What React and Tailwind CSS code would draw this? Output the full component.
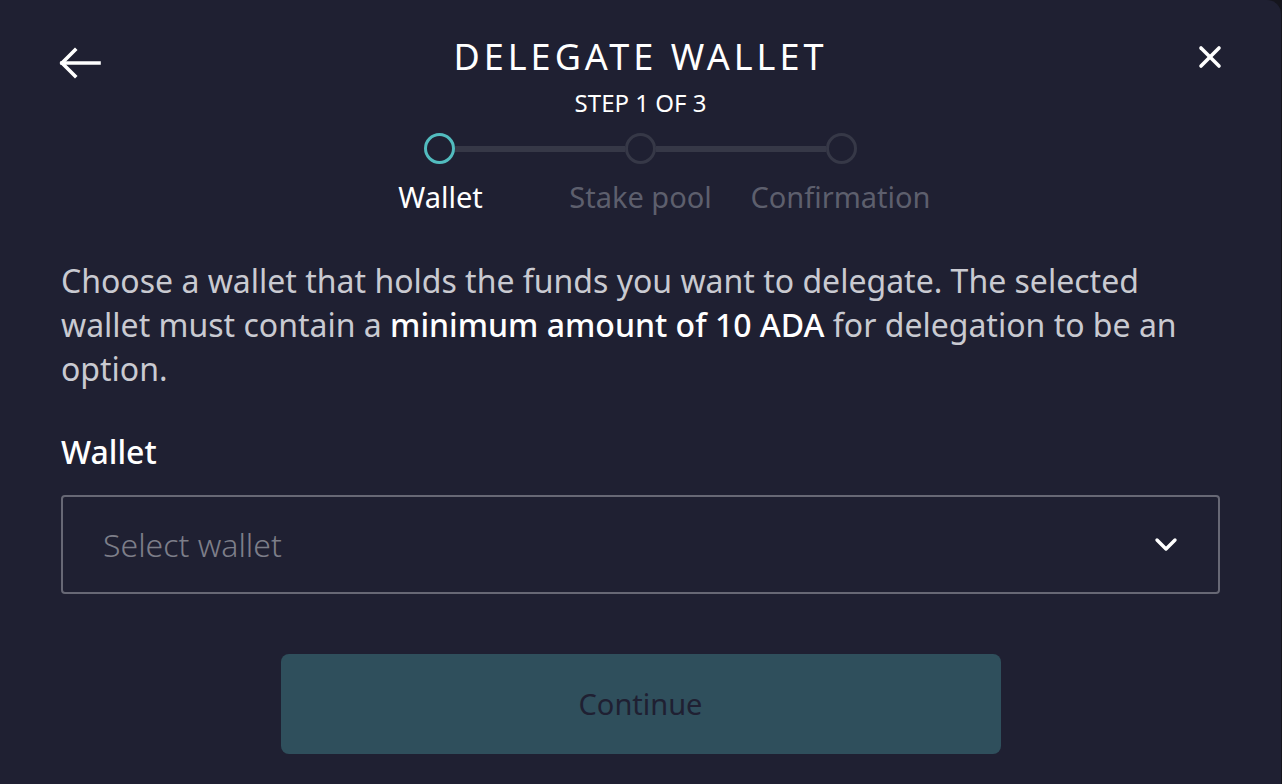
import React from 'react';

const steps = [
    { label: 'Wallet', active: true },
    { label: 'Stake pool', active: false },
    { label: 'Confirmation', active: false },
];

const BackArrow = () => (
    <svg width="44" height="32" viewBox="0 0 44 32" fill="none" stroke="white" strokeWidth="3.6" strokeLinecap="square">
        <path d="M4 16 H41" />
        <path d="M17 3 L4 16 L17 29" />
    </svg>
);

const CloseIcon = () => (
    <svg width="24" height="24" viewBox="0 0 24 24" fill="none" stroke="white" strokeWidth="3.6" strokeLinecap="round">
        <path d="M3 3 L21 21" />
        <path d="M21 3 L3 21" />
    </svg>
);

const Chevron = () => (
    <svg width="24" height="16" viewBox="0 0 24 16" fill="none" stroke="white" strokeWidth="3.4" strokeLinecap="round" strokeLinejoin="round">
        <path d="M3 3 L12 12 L21 3" />
    </svg>
);

const Stepper = () => (
    <div className="flex flex-col items-center">
        <div className="flex items-center mt-[14px]">
            {steps.map((s, i) => (
                <React.Fragment key={s.label}>
                    {i > 0 && <div className="w-[170px] h-[6px] bg-[#363847]" />}
                    <div
                        className={
                            s.active
                                ? 'w-[31px] h-[31px] rounded-full border-[3px] border-[#52bcbf]'
                                : 'w-[31px] h-[31px] rounded-full border-[3px] border-[#363847]'
                        }
                    />
                </React.Fragment>
            ))}
        </div>
        <div className="flex mt-[15px]">
            {steps.map((s) => (
                <div
                    key={s.label}
                    className={
                        s.active
                            ? 'w-[200px] text-center text-[29px] leading-[36px] text-white'
                            : 'w-[200px] text-center text-[29px] leading-[36px] text-[#5d5f6d]'
                    }
                >
                    {s.label}
                </div>
            ))}
        </div>
    </div>
);

const App = () => {
    return (
        <div className="flex w-full h-[784px] bg-[#15151d] font-['Noto_Sans',sans-serif]">
            <div className="flex-1 bg-[#1f2032] rounded-tr-[14px] px-[61px] pt-[35px]">
                <header className="grid grid-cols-[1fr_auto_1fr] items-start">
                    <div className="mt-[12px] -ml-[3px]">
                        <BackArrow />
                    </div>
                    <div className="flex flex-col items-center">
                        <h2 className="text-[36px] leading-[43px] tracking-[4px] text-white">DELEGATE WALLET</h2>
                        <p className="mt-[9px] text-[24px] leading-[32px] text-white">STEP 1 OF 3</p>
                    </div>
                    <div className="flex justify-end mt-[10px] -mr-[2px]">
                        <CloseIcon />
                    </div>
                </header>

                <Stepper />

                <p className="mt-[44px] text-[32px] leading-[44px] text-[#c9cad1]">
                    Choose a wallet that holds the funds you want to delegate. The selected wallet must contain a{' '}
                    <span className="font-medium text-white">minimum amount of 10 ADA</span> for delegation to be an option.
                </p>

                <label className="block mt-[41px] text-[32px] leading-[40px] font-medium text-white">Wallet</label>

                <div className="mt-[23px] h-[99px] w-[1159px] border-2 border-[#676875] rounded-[4px] flex items-center justify-between pl-[40px] pr-[40px]">
                    <span className="text-[32px] font-light text-[#7d7e89]">Select wallet</span>
                    <Chevron />
                </div>

                <div className="flex justify-center mt-[60px]">
                    <button className="w-[720px] h-[100px] rounded-[8px] bg-[#2f4f5c] flex items-center justify-center">
                        <span className="text-[29px] text-[#1f2032]">Continue</span>
                    </button>
                </div>
            </div>
            <div className="w-[3px] bg-[#15151d]" />
        </div>
    );
};

export default App;
